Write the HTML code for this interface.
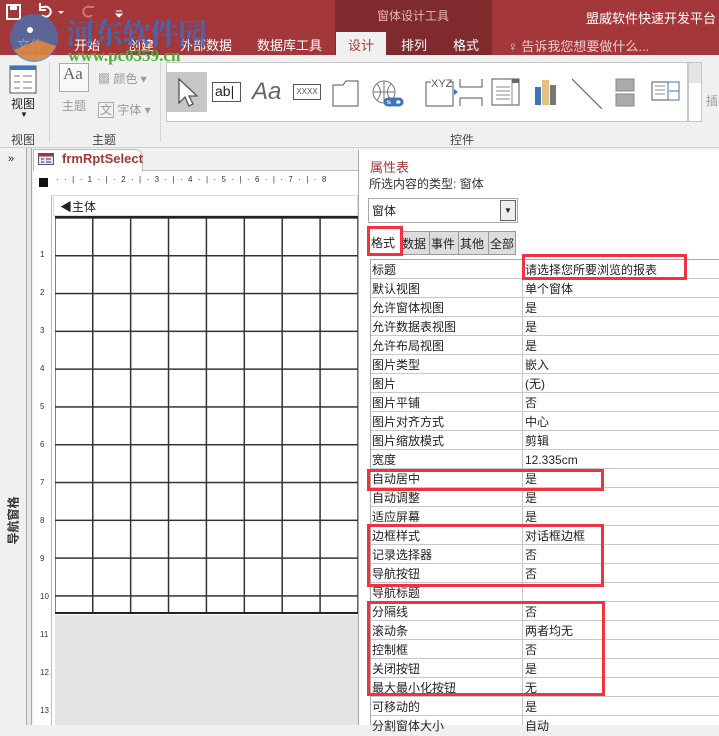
<!DOCTYPE html>
<html><head><meta charset="utf-8">
<style>
*{margin:0;padding:0;box-sizing:border-box}
body{width:719px;height:725px;overflow:hidden;position:relative;background:#f0f0f0;font-family:"Liberation Sans","Noto Sans CJK SC",sans-serif;font-size:12px;color:#222}
.a{position:absolute}
.red{background:#a4373a}
.t{white-space:nowrap}
.box{position:absolute;border:3px solid #ef3340}
</style></head><body>
<div class="a red" style="left:0;top:0;width:719px;height:55px"></div>
<div class="a" style="left:335px;top:0;width:157px;height:55px;background:#7f2a2d"></div>
<div class="a t" style="left:377px;top:7px;color:#e8b6b6;font-size:12px">窗体设计工具</div>
<div class="a t" style="left:586px;top:8px;color:#fff;font-size:13px">盟威软件快速开发平台 1.</div>
<svg class="a" style="left:4px;top:3px" width="120" height="20"><rect x="3" y="2" width="13" height="14" fill="none" stroke="#fff" stroke-width="2"/><rect x="6" y="2" width="7" height="5" fill="#fff"/><path d="M38 12a5 5 0 1 0 2-8l-4 0" fill="none" stroke="#fff" stroke-width="2"/><path d="M36 0v7h6" fill="none" stroke="#fff" stroke-width="2"/><path d="M54 8l3 3 3-3z" fill="#fff"/><path d="M88 12a5 5 0 1 1-2-8l4 0" fill="none" stroke="#c9797b" stroke-width="2"/><path d="M112 8h6M112 11l3 3 3-3z" fill="#fff" stroke="#fff"/></svg>
<div class="a t" style="left:17px;top:35px;color:#fff;font-size:13px">文件</div>
<div class="a t" style="left:74px;top:35px;color:#fff;font-size:13px">开始</div>
<div class="a t" style="left:128px;top:35px;color:#fff;font-size:13px">创建</div>
<div class="a t" style="left:180px;top:35px;color:#fff;font-size:13px">外部数据</div>
<div class="a t" style="left:257px;top:35px;color:#fff;font-size:13px">数据库工具</div>
<div class="a" style="left:336px;top:32px;width:50px;height:24px;background:#f0f0f0"></div>
<div class="a t" style="left:348px;top:35px;color:#a4373a;font-size:13px">设计</div>
<div class="a t" style="left:401px;top:35px;color:#fff;font-size:13px">排列</div>
<div class="a t" style="left:453px;top:35px;color:#fff;font-size:13px">格式</div>
<div class="a t" style="left:508px;top:36px;color:#eecbcb;font-size:13px">♀ 告诉我您想要做什么...</div>
<svg class="a" style="left:8px;top:12px" width="52" height="52"><circle cx="26" cy="26" r="24" fill="#3d78c0" opacity=".7"/><path d="M6 38a24 24 0 0 0 42-4l-18-6z" fill="#f08a30" opacity=".8"/><circle cx="22" cy="18" r="3" fill="#fff"/></svg>
<div class="a t" style="left:66px;top:12px;color:#3a6fc0;font-size:29px;font-weight:bold;font-family:'Noto Serif CJK SC',serif;letter-spacing:-1px;opacity:.85">河东软件园</div>
<div class="a t" style="left:68px;top:46px;color:#4caf3a;font-size:17px;font-weight:bold;font-family:'Liberation Serif',serif">www.pc0359.cn</div>
<svg class="a" style="left:9px;top:65px" width="28" height="30"><rect x="1" y="1" width="26" height="27" fill="#fff" stroke="#555"/><rect x="1" y="1" width="26" height="4" fill="#3e74b8"/><path d="M5 11h6M14 11h9M5 17h6M14 17h9M5 23h6M14 23h9" stroke="#777"/></svg>
<div class="a t" style="left:11px;top:95px;font-size:12px">视图</div>
<div class="a t" style="left:20px;top:110px;font-size:8px">▼</div>
<div class="a t" style="left:11px;top:131px;font-size:12px;color:#444">视图</div>
<div class="a" style="left:49px;top:62px;width:1px;height:80px;background:#d6d6d6"></div>
<div class="a" style="left:59px;top:63px;width:30px;height:29px;border:1px solid #aaa;background:#f8f8f8;font-family:'Liberation Serif',serif;font-size:17px;color:#666;padding-left:3px">Aa</div>
<div class="a t" style="left:62px;top:97px;color:#999">主题</div>
<div class="a t" style="left:98px;top:70px;color:#999">▩ 颜色 ▾</div>
<div class="a t" style="left:98px;top:101px;color:#999"><span style="border:1px solid #aaa;padding:0 1px">文</span> 字体 ▾</div>
<div class="a t" style="left:92px;top:131px;color:#444">主题</div>
<div class="a" style="left:160px;top:62px;width:1px;height:80px;background:#d6d6d6"></div>
<div class="a" style="left:166px;top:62px;width:522px;height:60px;background:#fff;border:1px solid #c6c6c6"></div>
<div class="a" style="left:167px;top:72px;width:40px;height:40px;background:#c6c6c6"></div>
<svg class="a" style="left:176px;top:77px" width="22" height="30"><path d="M3 2v24l6-6 4 9 4-2-4-8h8z" fill="#fff" stroke="#555" stroke-width="1.3"/></svg>
<div class="a" style="left:212px;top:82px;width:29px;height:20px;border:1px solid #555;font-size:14px;padding-left:2px;line-height:17px">ab|</div>
<div class="a t" style="left:252px;top:78px;font-size:24px;font-style:italic;color:#666">Aa</div>
<div class="a" style="left:293px;top:84px;width:28px;height:16px;border:1px solid #555;font-size:8px;text-align:center;line-height:14px;color:#555">XXXX</div>
<svg class="a" style="left:332px;top:77px" width="190" height="32"><path d="M1 8h10l3-4h12v25H1z" fill="#fff" stroke="#555"/><circle cx="52" cy="15" r="11" fill="none" stroke="#777"/><path d="M41 15h22M52 4v22M45 7q7 8 0 16M59 7q-7 8 0 16" fill="none" stroke="#777"/><rect x="53" y="22" width="10" height="6" rx="3" fill="none" stroke="#3e74b8" stroke-width="3"/><rect x="60" y="22" width="10" height="6" rx="3" fill="none" stroke="#3e74b8" stroke-width="3"/><rect x="94" y="5" width="27" height="24" fill="#fff" stroke="#555"/><rect x="99" y="0" width="18" height="10" fill="#fff"/><text x="99" y="10" font-size="11" fill="#555" font-family="Liberation Sans">XYZ</text><path d="M128 2v8h22v-8M128 29v-8h22v8" fill="none" stroke="#555"/><path d="M122 12l4 3-4 3z" fill="#3e74b8"/><rect x="160" y="2" width="27" height="26" fill="#fff" stroke="#555"/><path d="M164 10h14M164 14h14M164 18h14M164 22h14M180 2v26" stroke="#888"/><rect x="180" y="2" width="7" height="4" fill="#666"/></svg>
<svg class="a" style="left:532px;top:77px" width="160" height="32"><rect x="3" y="10" width="6" height="18" fill="#3e74b8"/><rect x="10" y="3" width="7" height="25" fill="#e8c07d"/><rect x="18" y="8" width="6" height="20" fill="#777"/><path d="M40 2l30 30" stroke="#555"/><rect x="84" y="2" width="18" height="12" fill="#aaa" stroke="#888"/><rect x="84" y="17" width="18" height="12" fill="#aaa" stroke="#888"/><rect x="120" y="5" width="27" height="18" fill="#fff" stroke="#555"/><path d="M123 9h10M123 13h10M123 17h10" stroke="#888"/><rect x="136" y="5" width="11" height="18" fill="none" stroke="#3e74b8"/><path d="M137 14h10" stroke="#3e74b8"/></svg>
<div class="a" style="left:688px;top:62px;width:14px;height:60px;border:1px solid #c6c6c6;background:#fff"></div>
<div class="a" style="left:689px;top:63px;width:12px;height:20px;background:#e4e4e4"></div>
<div class="a t" style="left:706px;top:92px;color:#999">插</div>
<div class="a t" style="left:450px;top:131px;color:#444">控件</div>
<div class="a" style="left:0;top:147px;width:719px;height:1px;background:#d0d0d0"></div>
<div class="a" style="left:0;top:148px;width:27px;height:577px;background:#f0f0f0;border-right:1px solid #aaa"></div>
<div class="a t" style="left:8px;top:153px;font-size:11px">»</div>
<div class="a t" style="left:-12px;top:512px;width:50px;text-align:center;font-size:12px;font-weight:bold;color:#333;transform:rotate(-90deg)">导航窗格</div>
<div class="a" style="left:27px;top:148px;width:5px;height:577px;background:#e7e7e7;border-right:1px solid #aaa"></div>
<div class="a" style="left:33px;top:170px;width:325px;height:555px;background:#fff"></div>
<div class="a" style="left:33px;top:149px;width:110px;height:22px;background:#fff;border:1px solid #bbb;border-bottom:none;border-radius:0 8px 0 0"></div>
<svg class="a" style="left:38px;top:153px" width="16" height="12"><rect x=".5" y=".5" width="15" height="11" fill="#e0e8f4" stroke="#557"/><rect x=".5" y=".5" width="15" height="3" fill="#a4373a"/><path d="M3 6h3M8 6h5M3 9h3M8 9h5" stroke="#335"/></svg>
<div class="a t" style="left:62px;top:151px;color:#a4373a;font-weight:bold;font-size:13px">frmRptSelect</div>
<div class="a" style="left:143px;top:170px;width:215px;height:1px;background:#bbb"></div>
<div class="a" style="left:39px;top:178px;width:9px;height:9px;background:#111"></div>
<div class="a t" style="left:56px;top:175px;font-size:8px;letter-spacing:5.4px;color:#333">··|·1·|·2·|·3·|·4·|·5·|·6·|·7·|·8</div>
<div class="a" style="left:36px;top:195px;width:16px;height:530px;background:#fff;border-right:1px solid #bbb"></div>
<div class="a" style="left:53px;top:195px;width:305px;height:21px;background:#fff;border:1px solid #ddd"></div>
<div class="a t" style="left:60px;top:198px;font-size:12px">◀主体</div>
<div class="a" style="left:55px;top:216px;width:303px;height:398px;border-top:2px solid #222;border-bottom:2px solid #222;
background:#fff;background-image:linear-gradient(90deg,#333 1.5px,transparent 1.5px),linear-gradient(#333 1.5px,transparent 1.5px);background-size:37.9px 37.8px;background-position:37px 0,0 37px"></div>
<div class="a" style="left:55px;top:615px;width:303px;height:110px;background:#e4e4e4"></div>
<div class="a" style="left:40px;top:236px;width:10px;font-size:8px;line-height:38px;color:#333">1<br>2<br>3<br>4<br>5<br>6<br>7<br>8<br>9<br>10<br>11<br>12<br>13</div>
<div class="a" style="left:358px;top:150px;width:361px;height:575px;background:#fff;border-left:1px solid #aaa"></div>
<div class="a t" style="left:370px;top:157px;color:#a4373a;font-size:13px">属性表</div>
<div class="a t" style="left:369px;top:175px;color:#333">所选内容的类型: 窗体</div>
<div class="a" style="left:368px;top:198px;width:150px;height:25px;border:1px solid #aaa"></div>
<div class="a t" style="left:372px;top:202px">窗体</div>
<div class="a" style="left:500px;top:200px;width:16px;height:21px;border:1px solid #666;background:#eee;font-size:8px;text-align:center;line-height:20px">▼</div>
<div class="a" style="left:401px;top:231px;width:115px;height:24px;background:#ddd;border:1px solid #999"></div>
<div class="a t" style="left:402px;top:235px">数据</div>
<div class="a" style="left:429px;top:231px;width:1px;height:24px;background:#999"></div>
<div class="a t" style="left:431px;top:235px">事件</div>
<div class="a" style="left:458px;top:231px;width:1px;height:24px;background:#999"></div>
<div class="a t" style="left:460px;top:235px">其他</div>
<div class="a" style="left:488px;top:231px;width:1px;height:24px;background:#999"></div>
<div class="a t" style="left:490px;top:235px">全部</div>
<div class="a t" style="left:371px;top:234px">格式</div>
<div class="a" style="left:370px;top:259px;width:349px;height:466px;border-left:1px solid #aaa;border-top:1px solid #aaa;
background-image:linear-gradient(90deg,transparent 151px,#c8c8c8 151px,#c8c8c8 152px,transparent 152px),linear-gradient(transparent 18px,#c8c8c8 18px);background-size:100% 19px,100% 19px"></div>
<div class="a" style="left:372px;top:261px;line-height:19px;font-size:12px;color:#222">标题<br>默认视图<br>允许窗体视图<br>允许数据表视图<br>允许布局视图<br>图片类型<br>图片<br>图片平铺<br>图片对齐方式<br>图片缩放模式<br>宽度<br>自动居中<br>自动调整<br>适应屏幕<br>边框样式<br>记录选择器<br>导航按钮<br>导航标题<br>分隔线<br>滚动条<br>控制框<br>关闭按钮<br>最大最小化按钮<br>可移动的<br>分割窗体大小</div>
<div class="a" style="left:525px;top:261px;line-height:19px;font-size:12px;color:#222">请选择您所要浏览的报表<br>单个窗体<br>是<br>是<br>是<br>嵌入<br>(无)<br>否<br>中心<br>剪辑<br>12.335cm<br>是<br>是<br>是<br>对话框边框<br>否<br>否<br>&nbsp;<br>否<br>两者均无<br>否<br>是<br>无<br>是<br>自动</div>
<div class="box" style="left:367px;top:226px;width:36px;height:30px"></div>
<div class="box" style="left:522px;top:254px;width:165px;height:26px"></div>
<div class="box" style="left:367px;top:469px;width:237px;height:22px"></div>
<div class="box" style="left:367px;top:524px;width:237px;height:63px"></div>
<div class="box" style="left:367px;top:601px;width:238px;height:95px"></div>
</body></html>
